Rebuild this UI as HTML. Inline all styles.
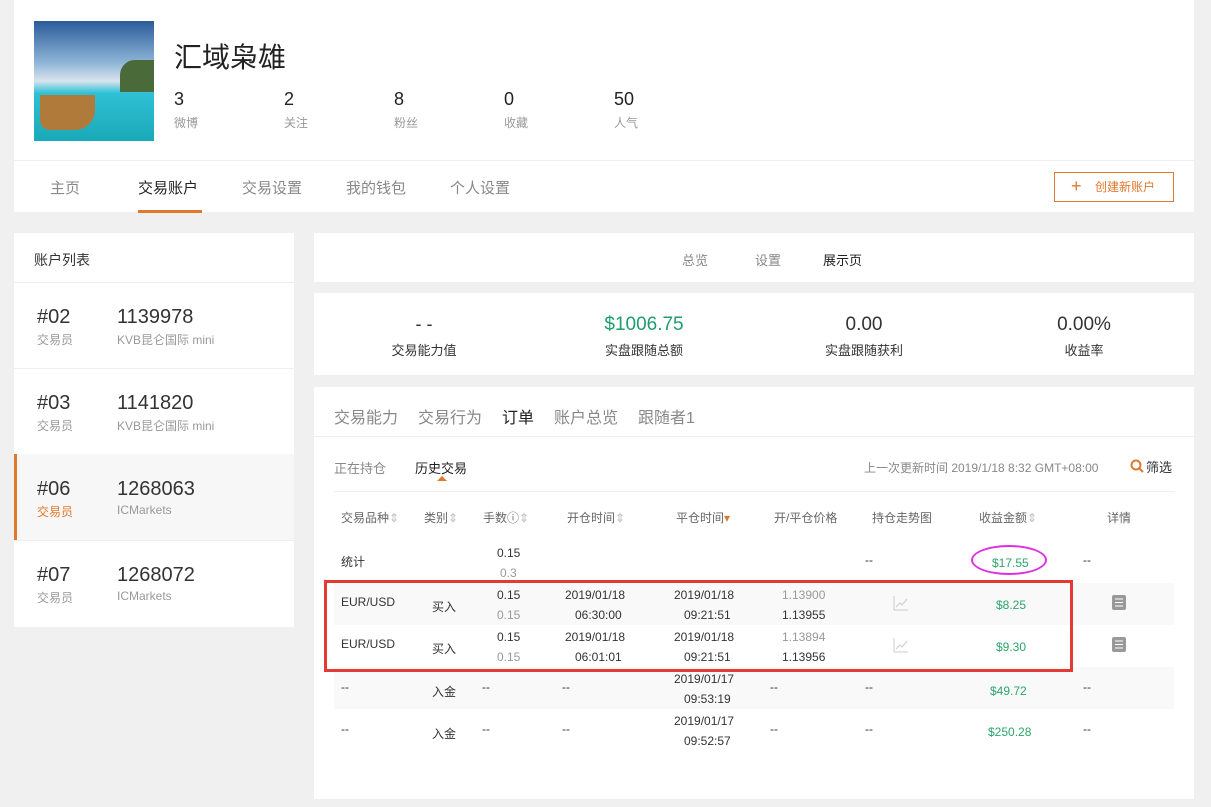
<!DOCTYPE html>
<html><head><meta charset="utf-8"><style>
*{margin:0;padding:0;box-sizing:border-box}
body{width:1211px;height:807px;background:#f0f0f0;font-family:"Liberation Sans","Noto Sans CJK SC",sans-serif;color:#333;position:relative;overflow:hidden}
.a{position:absolute}
.card{position:absolute;background:#fff}
.g{color:#999}
.gr{color:#2aa66a}
.c{text-align:center}
</style></head><body>
<div class="card" style="left:14px;top:0;width:1180px;height:212px"></div>
<div class="a" style="left:34px;top:21px;width:120px;height:120px;background:linear-gradient(180deg,#2a5c9a 0%,#8fb6d8 35%,#d8e4ec 50%,#2fc0d6 60%,#1aa9b8 100%)"></div>
<div class="a" style="left:40px;top:95px;width:55px;height:35px;background:#b07a3a;border-radius:0 0 20px 10px"></div>
<div class="a" style="left:120px;top:60px;width:34px;height:32px;background:#4a6a3a;border-radius:15px 0 0 0"></div>
<div class="a" style="left:174px;top:36px;font-size:28px;color:#222">汇域枭雄</div>
<div class="a" style="left:174px;top:89px;font-size:18px;color:#222">3</div><div class="a g" style="left:174px;top:114px;font-size:12px">微博</div>
<div class="a" style="left:284px;top:89px;font-size:18px;color:#222">2</div><div class="a g" style="left:284px;top:114px;font-size:12px">关注</div>
<div class="a" style="left:394px;top:89px;font-size:18px;color:#222">8</div><div class="a g" style="left:394px;top:114px;font-size:12px">粉丝</div>
<div class="a" style="left:504px;top:89px;font-size:18px;color:#222">0</div><div class="a g" style="left:504px;top:114px;font-size:12px">收藏</div>
<div class="a" style="left:614px;top:89px;font-size:18px;color:#222">50</div><div class="a g" style="left:614px;top:114px;font-size:12px">人气</div>
<div class="a" style="left:14px;top:160px;width:1180px;height:1px;background:#eee"></div>
<div class="a" style="left:50px;top:177px;font-size:15px;color:#888">主页</div>
<div class="a" style="left:138px;top:177px;font-size:15px;color:#222">交易账户</div>
<div class="a" style="left:138px;top:210px;width:64px;height:3px;background:#e0782e"></div>
<div class="a" style="left:242px;top:177px;font-size:15px;color:#888">交易设置</div>
<div class="a" style="left:346px;top:177px;font-size:15px;color:#888">我的钱包</div>
<div class="a" style="left:450px;top:177px;font-size:15px;color:#888">个人设置</div>
<div class="a" style="left:1054px;top:172px;width:120px;height:30px;border:1px solid #e0782e;color:#e0782e;font-size:12px;line-height:28px;padding-left:40px">创建新账户</div>
<div class="a" style="left:1071px;top:177px;font-size:18px;color:#e0782e;line-height:18px">+</div>

<div class="card" style="left:14px;top:233px;width:280px;height:394px"></div>
<div class="a" style="left:34px;top:250px;font-size:14px;color:#333">账户列表</div>
<div class="a" style="left:14px;top:282px;width:280px;height:1px;background:#eee"></div>
<div class="a" style="left:14px;top:368px;width:280px;height:1px;background:#eee"></div>
<div class="a" style="left:14px;top:454px;width:280px;height:86px;background:#f7f7f7;border-left:3px solid #e0782e"></div>
<div class="a" style="left:14px;top:540px;width:280px;height:1px;background:#eee"></div>
<div class="a" style="left:37px;top:306px;font-size:20px;color:#333">#02</div><div class="a g" style="left:37px;top:331px;font-size:12px">交易员</div>
<div class="a" style="left:117px;top:306px;font-size:20px;color:#333">1139978</div><div class="a g" style="left:117px;top:331px;font-size:12px">KVB昆仑国际 mini</div>
<div class="a" style="left:37px;top:392px;font-size:20px;color:#333">#03</div><div class="a g" style="left:37px;top:417px;font-size:12px">交易员</div>
<div class="a" style="left:117px;top:392px;font-size:20px;color:#333">1141820</div><div class="a g" style="left:117px;top:417px;font-size:12px">KVB昆仑国际 mini</div>
<div class="a" style="left:37px;top:478px;font-size:20px;color:#333">#06</div><div class="a" style="left:37px;top:503px;font-size:12px;color:#e0782e">交易员</div>
<div class="a" style="left:117px;top:478px;font-size:20px;color:#333">1268063</div><div class="a g" style="left:117px;top:503px;font-size:12px">ICMarkets</div>
<div class="a" style="left:37px;top:564px;font-size:20px;color:#333">#07</div><div class="a g" style="left:37px;top:589px;font-size:12px">交易员</div>
<div class="a" style="left:117px;top:564px;font-size:20px;color:#333">1268072</div><div class="a g" style="left:117px;top:589px;font-size:12px">ICMarkets</div>

<div class="card" style="left:314px;top:233px;width:880px;height:49px"></div>
<div class="a" style="left:682px;top:250px;font-size:13px;color:#888">总览</div>
<div class="a" style="left:755px;top:250px;font-size:13px;color:#888">设置</div>
<div class="a" style="left:823px;top:250px;font-size:13px;color:#222">展示页</div>

<div class="card" style="left:314px;top:293px;width:880px;height:82px"></div>
<div class="a c" style="left:314px;width:220px;top:314px;font-size:18px">- -</div><div class="a c" style="left:314px;width:220px;top:340px;font-size:13px">交易能力值</div>
<div class="a c" style="left:534px;width:220px;top:314px;font-size:19px;color:#1f9d6a">$1006.75</div><div class="a c" style="left:534px;width:220px;top:340px;font-size:13px">实盘跟随总额</div>
<div class="a c" style="left:754px;width:220px;top:314px;font-size:19px">0.00</div><div class="a c" style="left:754px;width:220px;top:340px;font-size:13px">实盘跟随获利</div>
<div class="a c" style="left:974px;width:220px;top:314px;font-size:19px">0.00%</div><div class="a c" style="left:974px;width:220px;top:340px;font-size:13px">收益率</div>

<div class="card" style="left:314px;top:387px;width:880px;height:412px"></div>
<div class="a" style="left:334px;top:404px;font-size:16px;color:#888">交易能力</div>
<div class="a" style="left:418px;top:404px;font-size:16px;color:#888">交易行为</div>
<div class="a" style="left:502px;top:404px;font-size:16px;color:#222">订单</div>
<div class="a" style="left:554px;top:404px;font-size:16px;color:#888">账户总览</div>
<div class="a" style="left:638px;top:404px;font-size:16px;color:#888">跟随者1</div>
<div class="a" style="left:314px;top:436px;width:880px;height:1px;background:#eee"></div>
<div class="a" style="left:334px;top:458px;font-size:13px;color:#888">正在持仓</div>
<div class="a" style="left:415px;top:458px;font-size:13px;color:#222">历史交易</div>
<div class="a" style="left:437px;top:476px;border:5px solid transparent;border-bottom-color:#e0782e;border-top:0"></div>
<div class="a" style="left:864px;top:459px;font-size:12px;color:#888">上一次更新时间 2019/1/18 8:32 GMT+08:00</div>
<svg class="a" style="left:1130px;top:459px" width="14" height="14" viewBox="0 0 14 14"><circle cx="6" cy="6" r="4.5" fill="none" stroke="#e0782e" stroke-width="2"/><line x1="9.5" y1="9.5" x2="13" y2="13" stroke="#e0782e" stroke-width="2"/></svg>
<div class="a" style="left:1146px;top:457px;font-size:13px;color:#333">筛选</div>
<div class="a" style="left:334px;top:491px;width:840px;height:1px;background:#eee"></div>
<div class="a" style="top:509px;left:341px;font-size:12px;color:#666;white-space:nowrap">交易品种<span style="color:#bbb">⇕</span></div>
<div class="a" style="top:509px;left:424px;font-size:12px;color:#666">类别<span style="color:#bbb">⇕</span></div>
<div class="a" style="top:509px;left:483px;font-size:12px;color:#666">手数ⓘ<span style="color:#bbb">⇕</span></div>
<div class="a" style="top:509px;left:567px;font-size:12px;color:#666">开仓时间<span style="color:#bbb">⇕</span></div>
<div class="a" style="top:509px;left:676px;font-size:12px;color:#666">平仓时间<span style="color:#e0782e">▾</span></div>
<div class="a" style="top:509px;left:774px;font-size:12px;color:#666">开/平仓价格</div>
<div class="a" style="top:509px;left:872px;font-size:12px;color:#666">持仓走势图</div>
<div class="a" style="top:509px;left:979px;font-size:12px;color:#666">收益金额<span style="color:#bbb">⇕</span></div>
<div class="a" style="top:509px;left:1107px;font-size:12px;color:#666">详情</div>

<div class="a" style="left:334px;top:583px;width:840px;height:42px;background:#f9f9f9"></div>
<div class="a" style="left:334px;top:667px;width:840px;height:42px;background:#f9f9f9"></div>
<div style="font-size:12px">
<div class="a" style="left:341px;top:553px">统计</div>
<div class="a" style="left:497px;top:546px">0.15</div><div class="a g" style="left:500px;top:566px">0.3</div>
<div class="a" style="left:865px;top:553px">--</div>
<div class="a gr" style="left:992px;top:556px">$17.55</div>
<div class="a" style="left:971px;top:545px;width:76px;height:30px;border:2px solid #e030e0;border-radius:50%"></div>
<div class="a" style="left:1083px;top:553px">--</div>

<div class="a" style="left:341px;top:595px">EUR/USD</div><div class="a" style="left:432px;top:598px">买入</div>
<div class="a" style="left:497px;top:588px">0.15</div><div class="a g" style="left:497px;top:608px">0.15</div>
<div class="a" style="left:565px;top:588px">2019/01/18</div><div class="a" style="left:575px;top:608px">06:30:00</div>
<div class="a" style="left:674px;top:588px">2019/01/18</div><div class="a" style="left:684px;top:608px">09:21:51</div>
<div class="a g" style="left:782px;top:588px">1.13900</div><div class="a" style="left:782px;top:608px">1.13955</div>
<svg class="a" style="left:893px;top:595px" width="16" height="16" viewBox="0 0 16 16"><path d="M1 1V15H15" fill="none" stroke="#ccc"/><path d="M3 12L7 8L9 10L14 4" fill="none" stroke="#ccc"/></svg>
<div class="a gr" style="left:996px;top:598px">$8.25</div>
<svg class="a" style="left:1112px;top:595px" width="14" height="15" viewBox="0 0 14 15"><rect width="14" height="15" rx="2" fill="#999"/><path d="M3 4H11M3 7.5H11M3 11H11" stroke="#fff"/></svg>

<div class="a" style="left:341px;top:637px">EUR/USD</div><div class="a" style="left:432px;top:640px">买入</div>
<div class="a" style="left:497px;top:630px">0.15</div><div class="a g" style="left:497px;top:650px">0.15</div>
<div class="a" style="left:565px;top:630px">2019/01/18</div><div class="a" style="left:575px;top:650px">06:01:01</div>
<div class="a" style="left:674px;top:630px">2019/01/18</div><div class="a" style="left:684px;top:650px">09:21:51</div>
<div class="a g" style="left:782px;top:630px">1.13894</div><div class="a" style="left:782px;top:650px">1.13956</div>
<svg class="a" style="left:893px;top:637px" width="16" height="16" viewBox="0 0 16 16"><path d="M1 1V15H15" fill="none" stroke="#ccc"/><path d="M3 12L7 8L9 10L14 4" fill="none" stroke="#ccc"/></svg>
<div class="a gr" style="left:996px;top:640px">$9.30</div>
<svg class="a" style="left:1112px;top:637px" width="14" height="15" viewBox="0 0 14 15"><rect width="14" height="15" rx="2" fill="#999"/><path d="M3 4H11M3 7.5H11M3 11H11" stroke="#fff"/></svg>

<div class="a" style="left:324px;top:580px;width:749px;height:92px;border:3px solid #e53935"></div>

<div class="a" style="left:341px;top:680px">--</div><div class="a" style="left:432px;top:683px">入金</div><div class="a" style="left:482px;top:680px">--</div><div class="a" style="left:562px;top:680px">--</div>
<div class="a" style="left:674px;top:672px">2019/01/17</div><div class="a" style="left:684px;top:692px">09:53:19</div>
<div class="a" style="left:770px;top:680px">--</div><div class="a" style="left:865px;top:680px">--</div>
<div class="a gr" style="left:990px;top:684px">$49.72</div><div class="a" style="left:1083px;top:680px">--</div>

<div class="a" style="left:341px;top:722px">--</div><div class="a" style="left:432px;top:725px">入金</div><div class="a" style="left:482px;top:722px">--</div><div class="a" style="left:562px;top:722px">--</div>
<div class="a" style="left:674px;top:714px">2019/01/17</div><div class="a" style="left:684px;top:734px">09:52:57</div>
<div class="a" style="left:770px;top:722px">--</div><div class="a" style="left:865px;top:722px">--</div>
<div class="a gr" style="left:988px;top:725px">$250.28</div><div class="a" style="left:1083px;top:722px">--</div>
</div>
</body></html>
